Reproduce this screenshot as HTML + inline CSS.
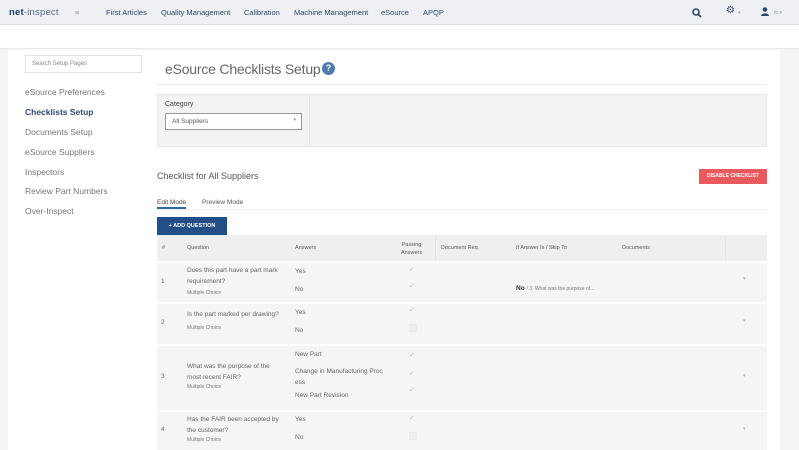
<!DOCTYPE html>
<html><head><style>
*{margin:0;padding:0;box-sizing:border-box}
body{width:799px;height:450px;overflow:hidden;background:#f4f5f7;font-family:"Liberation Sans",sans-serif;color:#555;position:relative}
.a{position:absolute;white-space:nowrap}
.nav{position:absolute;left:0;top:0;width:799px;height:25px;background:#eef0f3;border-bottom:1px solid #dde0e5}
.nav span{position:absolute;top:8px;font-size:7.5px;color:#2c4a6e}
.band{position:absolute;left:0;top:25px;width:799px;height:24px;background:#fff;border-bottom:1px solid #e6e8eb}
.main{position:absolute;left:8px;top:50px;width:772px;height:400px;background:#fff}
.side{font-size:8.5px;color:#777}
.th{font-size:5.5px;color:#555}
.row{position:absolute;left:157px;width:610px;background:#f5f5f5;border-top:2px solid #fff}
.t{font-size:6.5px;color:#666}
.mc{font-size:5px;color:#777}
.ck{font-size:7px;color:#bbb}
</style></head><body>
<div class="nav">
<span style="left:9px;top:7px;font-size:9.5px;font-weight:bold;color:#1f3f6b;letter-spacing:0.2px">net<span style="position:static;font-size:9.5px;font-weight:normal;color:#56688a">-inspect</span></span>
<span style="left:75px;top:8px;color:#999">≡</span>
<span style="left:106px">First Articles</span>
<span style="left:161px">Quality Management</span>
<span style="left:244px">Calibration</span>
<span style="left:294px">Machine Management</span>
<span style="left:381px">eSource</span>
<span style="left:423px">APQP</span>
<svg class="a" style="left:692px;top:8px" width="10" height="10" viewBox="0 0 10 10"><circle cx="4" cy="4" r="3" fill="none" stroke="#2c4a6e" stroke-width="1.6"/><path d="M6.2 6.2L9 9" stroke="#2c4a6e" stroke-width="1.8"/></svg>
<span style="left:726px;top:5px;font-size:10px">⚙</span><span style="left:738px;color:#999;font-size:5px;top:10px">▾</span>
<svg class="a" style="left:761px;top:7px" width="8" height="9" viewBox="0 0 8 9"><circle cx="4" cy="2.5" r="2.3" fill="#2c4a6e"/><path d="M0 9C0 5.5 8 5.5 8 9Z" fill="#2c4a6e"/></svg><span style="left:774px;color:#999;font-size:5px;top:10px">fo ▾</span>
</div>
<div class="band"></div>
<div class="main"></div>
<div class="a" style="left:25px;top:55px;width:117px;height:18px;border:1px solid #e3e3e3;font-size:6px;color:#888;padding:5px 6px">Search Setup Pages</div>
<div class="a side" style="left:25px;top:87px">eSource Preferences</div>
<div class="a side" style="left:25px;top:107px;color:#2c4a6e;font-weight:bold">Checklists Setup</div>
<div class="a side" style="left:25px;top:127px">Documents Setup</div>
<div class="a side" style="left:25px;top:147px">eSource Suppliers</div>
<div class="a side" style="left:25px;top:167px">Inspectors</div>
<div class="a side" style="left:25px;top:186px">Review Part Numbers</div>
<div class="a side" style="left:25px;top:206px">Over-Inspect</div>
<div class="a" style="left:165px;top:61px;font-size:14px;color:#666;letter-spacing:-0.2px">eSource Checklists Setup</div>
<div class="a" style="left:322px;top:62px;width:13px;height:13px;border-radius:50%;background:#4d7ab0;color:#fff;font-size:9px;font-weight:bold;text-align:center;line-height:13px">?</div>
<div class="a" style="left:157px;top:84px;width:610px;height:1px;background:#eee"></div>
<div class="a" style="left:157px;top:94px;width:610px;height:53px;background:#f3f3f3;border:1px solid #e6e6e6"></div>
<div class="a" style="left:309px;top:95px;width:1px;height:51px;background:#e3e3e3"></div>
<div class="a" style="left:165px;top:101px;font-size:7px;color:#444">Category</div>
<div class="a" style="left:165px;top:113px;width:137px;height:17px;background:#fff;border:1px solid #999;font-size:6.5px;color:#555;padding:4px 6px">All Suppliers<span style="position:absolute;right:5px;top:3px;font-size:5px;color:#888">▾</span></div>
<div class="a" style="left:157px;top:171px;font-size:9px;color:#555">Checklist for All Suppliers</div>
<div class="a" style="left:699px;top:169px;width:68px;height:15px;background:#e85a5d;color:#fff;font-size:5px;font-weight:bold;text-align:center;line-height:15px">DISABLE CHECKLIST</div>
<div class="a" style="left:157px;top:209px;width:610px;height:1px;background:#eee"></div>
<div class="a" style="left:157px;top:199px;font-size:6.5px;color:#444;border-bottom:2px solid #2c6aa0;padding-bottom:1px">Edit Mode</div>
<div class="a" style="left:202px;top:199px;font-size:6.5px;color:#555">Preview Mode</div>
<div class="a" style="left:157px;top:217px;width:70px;height:18px;background:#234f86;color:#fff;font-size:5.5px;font-weight:bold;text-align:center;line-height:18px">+ ADD QUESTION</div>
<div class="a" style="left:157px;top:235px;width:610px;height:26px;background:#efefef"></div>
<div class="a th" style="left:162px;top:245px">#</div>
<div class="a th" style="left:187px;top:245px">Question</div>
<div class="a th" style="left:295px;top:245px">Answers</div>
<div class="a th" style="left:401px;top:241px;line-height:8px;text-align:center">Passing<br>Answers</div>
<div class="a th" style="left:441px;top:245px">Document Req.</div>
<div class="a th" style="left:516px;top:245px">If Answer Is / Skip To</div>
<div class="a th" style="left:622px;top:245px">Documents</div>
<div class="a" style="left:435px;top:235px;width:1px;height:26px;background:#e4e4e4"></div>
<div class="a" style="left:725px;top:235px;width:1px;height:26px;background:#e4e4e4"></div>

<div class="row" style="top:261px;height:41px"></div>
<div class="row" style="top:302px;height:42px"></div>
<div class="row" style="top:344px;height:66px"></div>
<div class="row" style="top:410px;height:40px"></div>

<div class="a t" style="left:161px;top:278px">1</div>
<div class="a t" style="left:187px;top:265px;line-height:11px">Does this part have a part mark<br>requirement?</div>
<div class="a mc" style="left:187px;top:290px">Multiple Choice</div>
<div class="a t" style="left:295px;top:268px">Yes</div><div class="a t" style="left:295px;top:286px">No</div>
<div class="a ck" style="left:409px;top:265px">✓</div><div class="a ck" style="left:409px;top:282px">✓</div>
<div class="a" style="left:516px;top:285px;font-size:6.5px;color:#333"><b>No</b> <span style="font-size:5px;color:#777">/ 3. What was the purpose of...</span></div>
<div class="a" style="left:743px;top:276px;font-size:5px;color:#aaa">▾</div>

<div class="a t" style="left:161px;top:319px">2</div>
<div class="a t" style="left:187px;top:311px">Is the part marked per drawing?</div>
<div class="a mc" style="left:187px;top:325px">Multiple Choice</div>
<div class="a t" style="left:295px;top:309px">Yes</div><div class="a t" style="left:295px;top:327px">No</div>
<div class="a ck" style="left:409px;top:306px">✓</div>
<div class="a" style="left:409px;top:324px;width:8px;height:8px;background:#eee;border:1px solid #eaeaea"></div>
<div class="a" style="left:743px;top:318px;font-size:5px;color:#aaa">▾</div>

<div class="a t" style="left:161px;top:373px">3</div>
<div class="a t" style="left:187px;top:361px;line-height:11px">What was the purpose of the<br>most recent FAIR?</div>
<div class="a mc" style="left:187px;top:384px">Multiple Choice</div>
<div class="a t" style="left:295px;top:351px">New Part</div>
<div class="a t" style="left:295px;top:366px;line-height:11px">Change in Manufacturing Proc<br>ess</div>
<div class="a t" style="left:295px;top:392px">New Part Revision</div>
<div class="a ck" style="left:409px;top:351px">✓</div><div class="a ck" style="left:409px;top:369px">✓</div><div class="a ck" style="left:409px;top:386px">✓</div>
<div class="a" style="left:743px;top:373px;font-size:5px;color:#aaa">▾</div>

<div class="a t" style="left:161px;top:426px">4</div>
<div class="a t" style="left:187px;top:414px;line-height:11px">Has the FAIR been accepted by<br>the customer?</div>
<div class="a mc" style="left:187px;top:437px">Multiple Choice</div>
<div class="a t" style="left:295px;top:416px">Yes</div><div class="a t" style="left:295px;top:434px">No</div>
<div class="a ck" style="left:409px;top:414px">✓</div>
<div class="a" style="left:409px;top:432px;width:8px;height:8px;background:#eee;border:1px solid #eaeaea"></div>
<div class="a" style="left:743px;top:426px;font-size:5px;color:#aaa">▾</div>
</body></html>
